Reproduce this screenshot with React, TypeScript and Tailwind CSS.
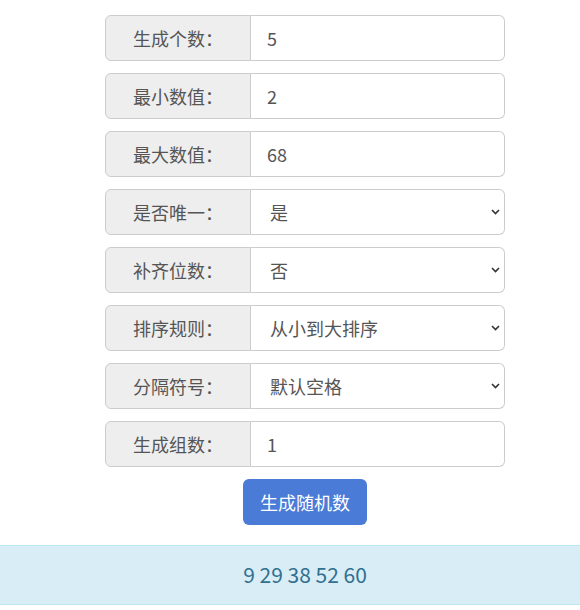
import { useState } from "react";

const font = { fontFamily: '"Noto Sans CJK SC", "Microsoft YaHei", sans-serif' };

type Field =
  | { label: string; kind: "input"; value: string }
  | { label: string; kind: "select"; value: string; options: string[] };

const fields: Field[] = [
  { label: "生成个数：", kind: "input", value: "5" },
  { label: "最小数值：", kind: "input", value: "2" },
  { label: "最大数值：", kind: "input", value: "68" },
  { label: "是否唯一：", kind: "select", value: "是", options: ["是", "否"] },
  { label: "补齐位数：", kind: "select", value: "否", options: ["否", "是"] },
  { label: "排序规则：", kind: "select", value: "从小到大排序", options: ["从小到大排序", "从大到小排序", "不排序"] },
  { label: "分隔符号：", kind: "select", value: "默认空格", options: ["默认空格", "逗号", "换行"] },
  { label: "生成组数：", kind: "input", value: "1" },
];

const Chevron = () => (
  <svg
    className="pointer-events-none absolute right-[5px] top-1/2 -translate-y-1/2"
    width="9"
    height="6"
    viewBox="0 0 9 6"
  >
    <path d="M1 1l3.5 3.5L8 1" fill="none" stroke="#333" strokeWidth="1.6" />
  </svg>
);

const Row = ({ field }: { field: Field }) => {
  const [val, setVal] = useState(field.value);
  return (
    <div className="flex h-[46px] w-[400px] text-[18px] text-[#555]">
      <span className="flex w-[146px] shrink-0 items-center justify-center rounded-l-[6px] border border-[#ccc] bg-[#eee]">
        {field.label}
      </span>
      {field.kind === "input" ? (
        <input
          value={val}
          onChange={(e) => setVal(e.target.value)}
          className="min-w-0 flex-1 rounded-r-[6px] border border-l-0 border-[#ccc] bg-white px-[16px] outline-none"
          style={font}
        />
      ) : (
        <div className="relative flex-1">
          <select
            value={val}
            onChange={(e) => setVal(e.target.value)}
            className="h-full w-full appearance-none rounded-r-[6px] border border-l-0 border-[#ccc] bg-white pl-[19px] outline-none"
            style={font}
          >
            {field.options.map((o) => (
              <option key={o}>{o}</option>
            ))}
          </select>
          <Chevron />
        </div>
      )}
    </div>
  );
};

export default function App() {
  return (
    <div className="w-full overflow-hidden">
      <div className="min-h-[610px] w-[610px] bg-white pt-[15px]" style={font}>
        <div className="flex flex-col items-center gap-[12px]">
          {fields.map((f) => (
            <Row key={f.label} field={f} />
          ))}
          <button className="h-[46px] w-[124px] rounded-[6px] bg-[#4a7bd6] text-[18px] text-white">
            生成随机数
          </button>
        </div>
        <div className="mt-[20px] flex h-[60px] items-center justify-center border-y border-[#bce8f1] bg-[#d9edf7] text-[21px] text-[#31708f]">
          9 29 38 52 60
        </div>
      </div>
    </div>
  );
}
